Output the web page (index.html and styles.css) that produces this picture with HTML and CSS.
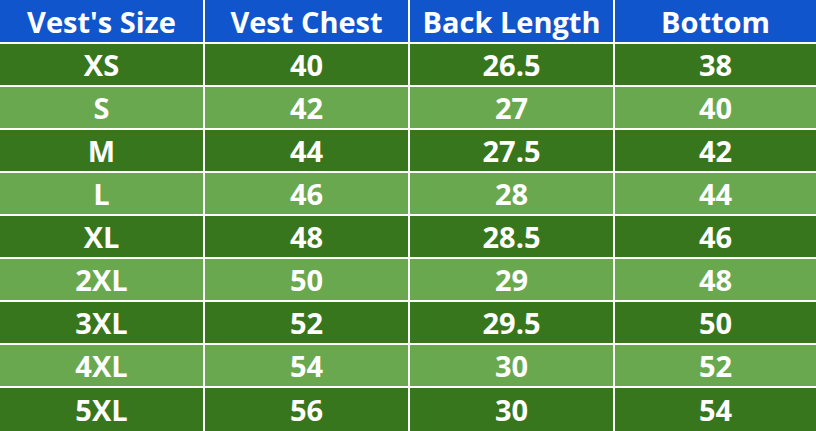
FILE: index.html
```html
<!DOCTYPE html>
<html>
<head>
<meta charset="utf-8">
<link rel="stylesheet" href="styles.css">
</head>
<body>
<div class="table">
  <div class="cell head">Vest's Size</div><div class="cell head">Vest Chest</div><div class="cell head">Back Length</div><div class="cell head">Bottom</div>
  <div class="cell dark">XS</div><div class="cell dark">40</div><div class="cell dark">26.5</div><div class="cell dark">38</div>
  <div class="cell light">S</div><div class="cell light">42</div><div class="cell light">27</div><div class="cell light">40</div>
  <div class="cell dark">M</div><div class="cell dark">44</div><div class="cell dark">27.5</div><div class="cell dark">42</div>
  <div class="cell light">L</div><div class="cell light">46</div><div class="cell light">28</div><div class="cell light">44</div>
  <div class="cell dark">XL</div><div class="cell dark">48</div><div class="cell dark">28.5</div><div class="cell dark">46</div>
  <div class="cell light">2XL</div><div class="cell light">50</div><div class="cell light">29</div><div class="cell light">48</div>
  <div class="cell dark">3XL</div><div class="cell dark">52</div><div class="cell dark">29.5</div><div class="cell dark">50</div>
  <div class="cell light">4XL</div><div class="cell light">54</div><div class="cell light">30</div><div class="cell light">52</div>
  <div class="cell dark">5XL</div><div class="cell dark">56</div><div class="cell dark">30</div><div class="cell dark">54</div>
</div>
</body>
</html>
```
FILE: styles.css
```css
html, body {
  margin: 0;
  padding: 0;
  background: #ffffff;
}
.table {
  width: 816px;
  height: 431px;
  display: grid;
  grid-template-columns: 203px 203px 203px 1fr;
  grid-template-rows: 42px repeat(8, 41px) 1fr;
  gap: 2px;
  background: #ffffff;
  font-family: "Open Sans", "Liberation Sans", sans-serif;
  font-weight: 700;
  font-size: 29px;
  color: #ffffff;
}
.cell {
  display: flex;
  align-items: center;
  justify-content: center;
  line-height: 1;
}
.head { background: #1155cc; }
.dark { background: #38761d; }
.light { background: #6aa84f; }
```
